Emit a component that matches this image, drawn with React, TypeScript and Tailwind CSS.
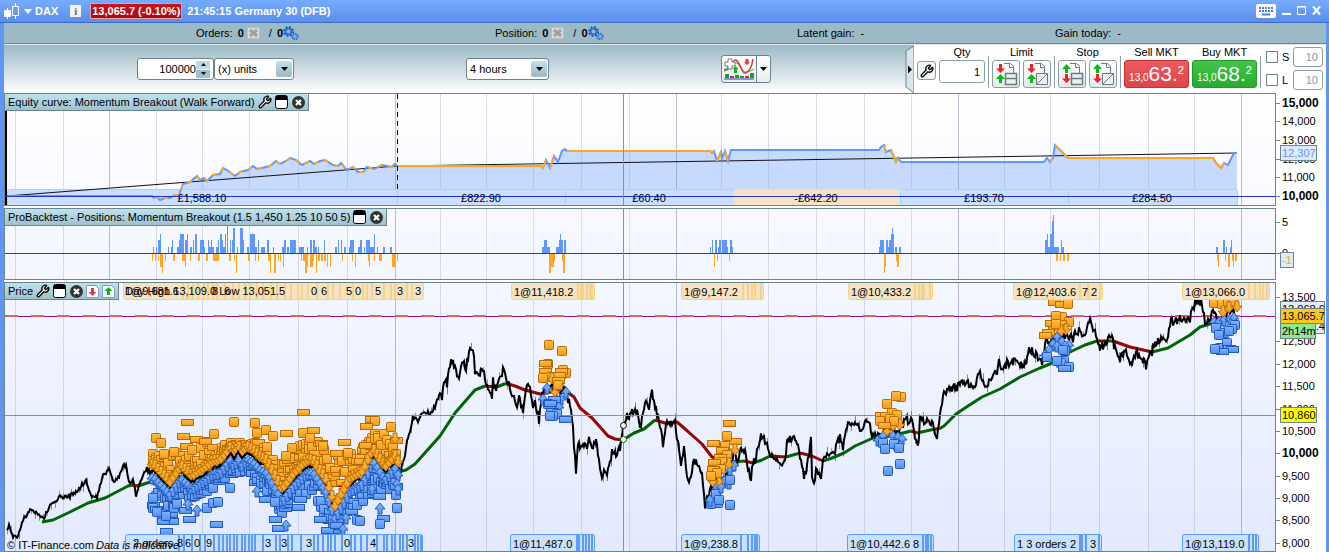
import { ReactNode } from "react";
import { Wrench } from "lucide-react";

type Point = [number, number];
type Bar = [x: number, width: number, level: number];
type Marker = [kind: "s" | "r" | "a", x: number, y: number];
type Tag = { x: number; width: number; text: string; slivers: number[]; extra?: [number, string][] };

// x of the chart's left edge; all series are stored in window coordinates
const LEFT = 5;

const gridLines = [15, 63, 156, 202, 249, 298, 347, 440, 486, 533, 581, 629, 721, 768, 816, 864, 911, 1004, 1050, 1099, 1148, 1194];
const yearLines = [109, 395, 676, 958, 1241];

const price: Point[] = [
  [7, 532], [9, 524], [13, 537], [17, 537], [23, 520], [30, 510], [37, 513], [44, 519], [47, 511], [53, 502], [60, 497], [70, 496],
  [78, 490], [86, 480], [91, 496], [97, 498], [103, 475], [109, 470], [113, 482], [119, 477], [123, 465], [126, 465], [129, 483],
  [133, 480], [136, 495], [140, 482], [147, 469], [150, 473], [153, 470], [170, 488], [181, 472], [192, 482], [207, 472], [213, 467],
  [220, 466], [227, 458], [231, 453], [234, 459], [238, 452], [242, 458], [247, 453], [253, 456], [260, 463], [267, 467], [282, 495],
  [295, 478], [306, 467], [313, 466], [327, 487], [335, 512], [350, 484], [363, 477], [373, 455], [385, 473], [395, 462], [400, 472],
  [404, 460], [407, 442], [410, 433], [413, 417], [418, 421], [423, 413], [430, 413], [435, 407], [440, 392], [442, 397], [444, 385],
  [447, 383], [451, 360], [455, 368], [459, 377], [463, 363], [466, 367], [468, 358], [471, 347], [474, 355], [475, 372], [479, 377],
  [483, 367], [485, 383], [492, 397], [493, 380], [496, 393], [500, 377], [503, 370], [508, 383], [513, 397], [517, 408], [519, 395],
  [523, 413], [527, 383], [530, 390], [533, 410], [535, 400], [539, 420], [542, 393], [550, 383], [557, 397], [565, 387], [570, 407],
  [573, 427], [574, 447], [576, 470], [578, 443], [583, 447], [587, 447], [589, 433], [592, 447], [596, 440], [598, 457], [602, 480],
  [604, 467], [607, 478], [610, 460], [613, 450], [617, 457], [620, 447], [622, 437], [623, 425], [627, 417], [633, 410], [637, 413],
  [641, 428], [643, 410], [646, 403], [649, 412], [651, 395], [652, 392], [656, 410], [659, 423], [663, 443], [667, 420], [670, 427],
  [674, 417], [677, 437], [681, 467], [684, 450], [687, 480], [690, 480], [693, 462], [698, 463], [702, 477], [705, 505], [709, 493],
  [717, 480], [723, 480], [730, 470], [734, 453], [737, 463], [740, 452], [745, 453], [748, 470], [751, 477], [753, 463], [757, 453],
  [761, 433], [765, 440], [768, 447], [771, 460], [773, 453], [778, 462], [785, 462], [787, 443], [792, 438], [798, 445], [802, 467],
  [804, 477], [807, 467], [811, 440], [812, 480], [813, 485], [817, 467], [821, 483], [823, 463], [828, 453], [835, 450], [840, 437],
  [843, 447], [846, 427], [852, 420], [857, 427], [862, 432], [865, 423], [869, 422], [872, 435], [880, 437], [887, 430], [900, 430],
  [906, 418], [912, 423], [916, 443], [918, 448], [920, 418], [927, 422], [933, 425], [937, 435], [939, 423], [941, 407], [943, 395],
  [946, 396], [949, 388], [957, 388], [960, 382], [967, 382], [972, 385], [976, 383], [979, 372], [983, 382], [987, 387], [990, 378],
  [997, 373], [999, 363], [1003, 373], [1007, 362], [1013, 363], [1017, 358], [1022, 368], [1027, 360], [1029, 348], [1034, 353],
  [1038, 358], [1042, 363], [1046, 343], [1057, 337], [1067, 337], [1073, 338], [1077, 330], [1082, 333], [1086, 331], [1090, 323],
  [1097, 335], [1099, 347], [1104, 347], [1110, 335], [1113, 342], [1117, 355], [1120, 358], [1124, 352], [1128, 355], [1132, 367],
  [1134, 353], [1140, 355], [1146, 367], [1148, 357], [1152, 353], [1155, 342], [1167, 338], [1171, 322], [1180, 319], [1190, 319],
  [1193, 307], [1197, 300], [1202, 303], [1205, 320], [1208, 322], [1213, 313], [1220, 320], [1227, 317], [1232, 308], [1236, 317],
];

const averages: { up: boolean; points: string }[] = [
  { up: true, points: "42,522 53,520 70,512 88,503 105,498 128,486 132,485" },
  { up: false, points: "132,485 138,486" },
  { up: true, points: "138,486 150,482 165,476 200,478 225,464 255,462" },
  { up: false, points: "255,462 268,465 282,471 298,474 325,485 355,486" },
  { up: true, points: "355,486 365,482 380,474 398,472 406,470 415,464 440,436 455,413 475,390 485,386" },
  { up: false, points: "485,386 497,387" },
  { up: true, points: "497,387 504,384 508,384" },
  { up: false, points: "508,384 515,386 525,390 540,394 556,391 570,394 574,397 580,408 592,418 600,427 608,436 615,439 623,440" },
  { up: true, points: "623,440 634,433 644,429 655,420" },
  { up: false, points: "655,420 665,423 677,422 684,428 693,436 702,444 712,457 733,462" },
  { up: true, points: "733,462 744,461" },
  { up: false, points: "744,461 753,463" },
  { up: true, points: "753,463 762,460 770,456" },
  { up: false, points: "770,456 786,457" },
  { up: true, points: "786,457 800,453" },
  { up: false, points: "800,453 812,456 823,461" },
  { up: true, points: "823,461 832,458 844,453 855,446 873,438 880,438 895,435 911,431" },
  { up: false, points: "911,431 917,433" },
  { up: true, points: "917,433 935,429" },
  { up: false, points: "935,429 939,429" },
  { up: true, points: "939,429 944,426 956,414 968,406 982,397 1000,389 1020,377 1040,368 1050,364 1070,352 1085,345 1097,341" },
  { up: false, points: "1097,341 1106,341" },
  { up: true, points: "1106,341 1113,341" },
  { up: false, points: "1113,341 1130,347 1152,352" },
  { up: true, points: "1152,352 1168,348 1190,335 1200,327 1213,323 1225,321 1237,320" },
];

const equity: Point[] = [
  [7, 196], [152, 196], [154, 198], [157, 197], [160, 200], [165, 198], [170, 198], [175, 195], [179, 195], [183, 184], [190, 182], [197, 176],
  [200, 180], [204, 178], [207, 181], [213, 175], [220, 174], [223, 168], [227, 170], [231, 173], [235, 176], [240, 172], [248, 170],
  [253, 166], [257, 169], [262, 168], [270, 166], [276, 161], [280, 164], [286, 161], [290, 158], [296, 160], [302, 165], [310, 161],
  [314, 164], [320, 161], [325, 160], [333, 165], [338, 166], [341, 163], [347, 170], [353, 167], [358, 172], [363, 172], [367, 167],
  [374, 169], [382, 165], [392, 167], [395, 164], [397, 166], [541, 166], [543, 168], [546, 160], [550, 168], [554, 156], [558, 162],
  [562, 151], [565, 149], [567, 151], [710, 151], [712, 153], [714, 151], [717, 161], [721, 152], [722, 158], [725, 151], [728, 161],
  [731, 150], [879, 150], [881, 147], [884, 145], [886, 152], [891, 150], [896, 162], [898, 158], [901, 162], [1044, 162], [1047, 158],
  [1050, 162], [1053, 158], [1055, 145], [1060, 150], [1068, 158], [1213, 158], [1216, 163], [1221, 168], [1224, 163], [1228, 165],
  [1234, 153], [1237, 153],
];

// index ranges of the equity series that are falling
const losses = [[49, 52], [53, 54], [58, 61], [62, 63], [65, 66], [70, 71], [72, 74], [78, 79], [80, 86]];

const periods = [
  { from: 7, to: 397, gain: "£1,588.10", at: 202 },
  { from: 397, to: 565, gain: "£822.90", at: 481 },
  { from: 565, to: 733, gain: "£60.40", at: 649 },
  { from: 733, to: 900, gain: "-£642.20", at: 816 },
  { from: 900, to: 1068, gain: "£193.70", at: 984 },
  { from: 1068, to: 1237, gain: "£284.50", at: 1152 },
];

const longBars: Bar[] = [
  [153, 1, 1], [156, 1, 1], [158, 2, 2], [160, 1, 3], [168, 1, 1], [171, 1, 1], [172, 1, 2], [177, 2, 1], [179, 1, 2], [180, 4, 3],
  [185, 2, 2], [187, 1, 3], [190, 2, 1], [193, 1, 2], [195, 2, 3], [200, 4, 2], [204, 1, 1], [208, 1, 2], [209, 2, 1], [211, 1, 2],
  [212, 2, 1], [216, 2, 1], [218, 1, 2], [220, 2, 3], [222, 1, 2], [223, 2, 1], [225, 1, 3], [227, 1, 5], [230, 1, 2], [232, 1, 2],
  [233, 2, 4], [237, 1, 1], [240, 3, 4], [243, 1, 2], [247, 2, 1], [250, 5, 3], [255, 2, 1], [258, 1, 2], [261, 4, 1], [267, 2, 2],
  [273, 1, 1], [282, 2, 1], [284, 2, 2], [287, 2, 1], [290, 6, 2], [299, 5, 1], [307, 1, 1], [310, 2, 2], [313, 2, 2], [315, 2, 1],
  [318, 1, 1], [324, 1, 2], [335, 2, 1], [338, 1, 2], [341, 1, 2], [344, 2, 1], [349, 1, 1], [350, 4, 2], [358, 2, 1], [360, 2, 2],
  [364, 1, 1], [366, 4, 2], [370, 4, 1], [374, 1, 3], [377, 1, 1], [383, 2, 1], [390, 2, 1],
  [542, 2, 1], [544, 3, 2], [547, 3, 1], [556, 3, 1], [559, 1, 2], [560, 1, 3], [561, 2, 2], [564, 2, 2],
  [710, 1, 1], [712, 1, 2], [715, 2, 2], [718, 1, 1], [719, 2, 2], [722, 5, 2], [727, 1, 1], [730, 2, 2], [732, 1, 1],
  [879, 1, 1], [880, 4, 2], [886, 2, 2], [888, 1, 1], [889, 2, 2], [891, 1, 3], [892, 1, 4], [893, 1, 3], [895, 2, 1], [899, 2, 1],
  [1045, 2, 2], [1047, 1, 3], [1048, 2, 1], [1050, 2, 3], [1052, 1, 5], [1053, 1, 6], [1054, 5, 1], [1061, 1, 2], [1062, 2, 1],
  [1216, 2, 1], [1223, 2, 2], [1226, 1, 1], [1230, 1, 1], [1231, 1, 2],
];

const shortBars: Bar[] = [
  [152, 1, 1], [155, 1, 1], [158, 1, 1], [160, 2, 2], [162, 1, 3], [165, 1, 1], [173, 2, 1], [182, 3, 1], [185, 1, 2], [190, 1, 1],
  [198, 2, 1], [206, 2, 1], [213, 6, 1], [229, 2, 1], [234, 1, 1], [236, 1, 3], [248, 2, 1], [255, 1, 1], [258, 1, 1], [268, 2, 1],
  [270, 1, 3], [274, 2, 3], [278, 1, 1], [280, 1, 1], [283, 1, 2], [301, 1, 1], [303, 2, 1], [305, 2, 3], [307, 1, 2], [310, 3, 2],
  [313, 1, 1], [316, 1, 3], [318, 2, 1], [321, 2, 1], [324, 2, 1], [327, 1, 2], [330, 1, 2], [342, 1, 1], [352, 1, 1], [355, 1, 2],
  [368, 1, 1], [369, 1, 2], [374, 1, 1], [379, 3, 1], [392, 4, 2], [397, 1, 1],
  [549, 2, 3], [551, 3, 2], [554, 1, 1], [562, 1, 1], [563, 2, 3],
  [714, 1, 2], [717, 1, 1], [729, 1, 1],
  [884, 1, 3], [885, 1, 2], [896, 1, 1], [897, 2, 2],
  [1056, 2, 1], [1060, 1, 1], [1063, 2, 1], [1067, 2, 1],
  [1217, 1, 1], [1218, 1, 2], [1225, 1, 1], [1228, 2, 2], [1232, 1, 1], [1233, 1, 2], [1235, 2, 1],
];

const sells: Marker[] = [
  ["r", 303, 412], ["r", 187, 422], ["s", 234, 422], ["s", 255, 423], ["s", 257, 433], ["s", 266, 430], ["s", 273, 436], ["r", 286, 433],
  ["s", 214, 434], ["r", 183, 436], ["s", 156, 438], ["s", 161, 443], ["s", 303, 433], ["r", 313, 430], ["s", 310, 438], ["r", 344, 442],
  ["r", 371, 419], ["s", 375, 421], ["r", 366, 426], ["s", 391, 427], ["a", 395, 438], ["s", 292, 448], ["s", 286, 456], ["r", 336, 453],
  ["s", 348, 453], ["s", 174, 452], ["s", 164, 454], ["r", 196, 439], ["r", 205, 441], ["r", 365, 445], ["s", 323, 446],
  ["s", 549, 345], ["s", 562, 351], ["s", 548, 364], ["r", 545, 363], ["s", 563, 370], ["r", 545, 371], ["s", 566, 373], ["r", 561, 371],
  ["s", 551, 377], ["s", 543, 378], ["r", 559, 375], ["a", 552, 378], ["a", 555, 391], ["r", 558, 380], ["s", 558, 385],
  ["r", 729, 423], ["r", 735, 441], ["s", 727, 436], ["r", 713, 443], ["s", 725, 446], ["a", 735, 449], ["r", 722, 450], ["s", 727, 455],
  ["r", 720, 457], ["s", 722, 462], ["a", 729, 463], ["r", 714, 462], ["s", 721, 469], ["r", 713, 469], ["a", 719, 480], ["a", 713, 481],
  ["s", 717, 473], ["s", 711, 476],
  ["s", 901, 397], ["s", 896, 396], ["s", 887, 404], ["s", 892, 413], ["s", 897, 415], ["r", 881, 415], ["s", 885, 417], ["s", 890, 419],
  ["a", 887, 430], ["a", 893, 425], ["a", 900, 424], ["s", 894, 421], ["s", 880, 421], ["r", 884, 425],
  ["r", 1054, 302], ["r", 1061, 304], ["s", 1068, 304], ["s", 1062, 317], ["s", 1056, 316], ["s", 1069, 322], ["r", 1060, 323],
  ["a", 1066, 329], ["a", 1061, 330], ["s", 1053, 326], ["r", 1051, 323], ["r", 1048, 332], ["r", 1045, 335], ["s", 1056, 324],
  ["s", 1214, 303], ["s", 1222, 304], ["s", 1228, 302], ["a", 1223, 311], ["s", 1233, 303], ["a", 1237, 306], ["a", 1229, 307],
];

const buys: Marker[] = [
  ["s", 153, 498], ["s", 157, 512], ["r", 172, 521], ["r", 163, 521], ["r", 166, 531], ["s", 166, 516], ["r", 185, 510], ["r", 189, 519],
  ["a", 197, 511], ["a", 188, 505], ["s", 207, 508], ["s", 213, 503], ["s", 218, 502], ["r", 216, 524], ["s", 230, 488], ["a", 257, 492],
  ["r", 265, 499], ["s", 275, 502], ["r", 275, 519], ["r", 278, 528], ["a", 286, 526], ["r", 298, 507], ["r", 300, 499], ["r", 320, 519],
  ["r", 327, 530], ["r", 336, 525], ["a", 346, 519], ["s", 357, 520], ["s", 360, 521], ["a", 343, 530], ["a", 372, 490], ["r", 379, 496],
  ["r", 383, 518], ["s", 380, 524], ["a", 380, 509], ["s", 397, 508], ["s", 396, 495], ["a", 397, 485], ["a", 398, 490], ["r", 334, 537],
  ["a", 547, 389], ["a", 566, 393], ["a", 543, 400], ["a", 561, 400], ["a", 559, 408], ["r", 554, 399], ["s", 548, 404], ["r", 550, 403],
  ["r", 552, 411], ["s", 557, 414], ["r", 565, 419], ["s", 553, 416], ["s", 550, 416],
  ["a", 730, 471], ["a", 734, 466], ["a", 724, 482], ["a", 729, 484], ["s", 730, 480], ["a", 717, 489], ["s", 716, 494], ["a", 721, 488],
  ["s", 718, 503], ["s", 711, 504], ["a", 710, 501], ["s", 730, 505], ["s", 719, 500],
  ["a", 878, 441], ["a", 883, 437], ["a", 893, 437], ["a", 898, 438], ["a", 902, 440], ["s", 883, 443], ["s", 898, 446], ["s", 894, 444],
  ["s", 885, 449], ["s", 900, 464], ["s", 888, 471], ["s", 899, 448],
  ["a", 1057, 338], ["a", 1053, 345], ["a", 1062, 343], ["a", 1069, 346], ["a", 1049, 351], ["a", 1045, 356], ["a", 1057, 347],
  ["a", 1065, 347], ["s", 1047, 357], ["s", 1065, 351], ["s", 1063, 350], ["s", 1064, 361], ["s", 1061, 363], ["s", 1057, 361],
  ["s", 1069, 367], ["r", 1064, 368],
  ["a", 1214, 323], ["a", 1219, 323], ["a", 1224, 321], ["a", 1230, 320], ["a", 1234, 319], ["s", 1216, 328], ["s", 1235, 325],
  ["s", 1232, 329], ["s", 1224, 333], ["s", 1219, 335], ["s", 1229, 331], ["s", 1220, 348], ["s", 1227, 343], ["r", 1229, 348],
  ["r", 1232, 349], ["r", 1222, 351], ["s", 1215, 349],
];

const sellTags: Tag[] = [
  { x: 511, width: 65, text: "1@11,418.2", slivers: [577, 580, 582, 586, 589, 591] },
  { x: 681, width: 60, text: "1@9,147.2", slivers: [742, 747, 751, 754, 760] },
  { x: 848, width: 65, text: "1@10,433.2", slivers: [914, 918, 921, 923, 929] },
  { x: 1013, width: 65, text: "1@12,403.6", slivers: [1079, 1087, 1099], extra: [[1082, "7"], [1091, "2"]] },
  { x: 1182, width: 65, text: "1@13,066.0", slivers: [1248, 1254, 1259, 1262, 1266] },
];

const buyTags: Tag[] = [
  { x: 510, width: 65, text: "1@11,487.0", slivers: [576, 578, 582, 585, 588, 591] },
  { x: 681, width: 58, text: "1@9,238.8", slivers: [740, 747, 751, 754, 756] },
  { x: 847, width: 65, text: "1@10,442.6", slivers: [922, 925, 927, 930], extra: [[913, "8"]] },
  { x: 1014, width: 55, text: "1 3 orders", slivers: [1079, 1081, 1085, 1098], extra: [[1070, "2"], [1090, "3"]] },
  { x: 1182, width: 65, text: "1@13,119.0", slivers: [1248, 1252, 1255] },
];

function randomizer(seed: number) {
  let state = seed;
  return () => {
    state = (state * 16807) % 2147483647;
    return state / 2147483647;
  };
}

function valueAt(points: Point[], x: number) {
  const i = points.findIndex((p) => p[0] >= x);
  if (i === -1) return points[points.length - 1][1];
  if (i === 0) return points[0][1];
  const [x0, y0] = points[i - 1];
  const [x1, y1] = points[i];
  return y0 + ((y1 - y0) * (x - x0)) / (x1 - x0);
}

const random = randomizer(4711);
const pricePath: Point[] = [];
for (let x = 7; x <= 1236; x += 1) {
  const noise = x < 440 ? 4 : 9;
  const flat = x > 225 && x < 255;
  pricePath.push([x, valueAt(price, x) + (flat ? 0 : (random() - 0.5) * noise)]);
}
const wicks = pricePath
  .filter((_, i) => i % 4 === 0)
  .map(([x, y]) => ({ x, y, top: random() > 0.5, size: 3 + random() * 4, up: random() > 0.5 }));

// the first walk-forward window is so dense that its markers fill a band around the price
const sellTop: Point[] = [[150, 450], [170, 458], [182, 446], [200, 443], [215, 440], [230, 441], [255, 441], [270, 446], [282, 464], [300, 444], [318, 436], [330, 460], [340, 454], [355, 451], [368, 436], [380, 428], [400, 442]];
const buyBottom: Point[] = [[150, 509], [165, 526], [180, 500], [205, 494], [230, 475], [250, 475], [265, 497], [280, 516], [300, 496], [315, 495], [325, 520], [335, 535], [350, 512], [365, 500], [385, 488], [400, 490]];
const denseSells: Marker[] = [];
const denseBuys: Marker[] = [];
for (let x = 153; x <= 398; x += 3) {
  const mid = valueAt(price, x);
  const kinds = ["s", "r", "s"] as const;
  for (let n = 0; n < 2; n++) {
    const top = valueAt(sellTop, x);
    const bottom = valueAt(buyBottom, x);
    denseSells.push([kinds[Math.floor(random() * 3)], x, top + (mid - 7 - top) * random()]);
    denseBuys.push([kinds[Math.floor(random() * 3)], x, mid + 9 + (bottom - mid - 9) * random()]);
  }
}
for (let x = 152; x <= 399; x += 3) {
  const mid = valueAt(price, x);
  denseSells.push(["a", x, mid - 7]);
  denseBuys.push(["a", x, mid + 8]);
}

function linePoints(points: Point[]) {
  return points.map(([x, y]) => `${x},${y.toFixed(1)}`).join(" ");
}

function Plot({ top, height, className, overlay, children }: { top: number; height: string; className: string; overlay?: ReactNode; children: ReactNode }) {
  return (
    <svg className={`block w-full ${height} ${className}`} fontFamily="Liberation Sans, Arial, sans-serif" fontSize="11">
      <g transform={`translate(${-LEFT} ${-top})`}>
        <g shapeRendering="crispEdges">
          {gridLines.map((x) => (
            <rect key={x} x={x} y={top} width="1" height="300" fill="#5a6488" fillOpacity="0.2" />
          ))}
          {yearLines.map((x) => (
            <rect key={x} x={x} y={top} width="1" height="300" fill="#5a6090" fillOpacity="0.4" />
          ))}
        </g>
        {children}
        <rect x="623" y={top} width="1" height="300" fill="#c966dc" />
        {overlay}
      </g>
    </svg>
  );
}

function Axis({ top, height, children }: { top: number; height: string; children: ReactNode }) {
  return (
    <svg className={`block w-[50px] shrink-0 bg-white ${height}`} fontFamily="Liberation Sans, Arial, sans-serif" fontSize="11">
      <g transform={`translate(-1276 ${-top})`}>{children}</g>
    </svg>
  );
}

function Tick({ y, label, bold }: { y: number; label: string; bold?: boolean }) {
  return (
    <g>
      <rect x="1276" y={y} width="4" height="1" fill="#6b858d" />
      <text x="1282" y={y + 4} fontSize={bold ? 12 : 11} fontWeight={bold ? 700 : 400}>
        {label}
      </text>
    </g>
  );
}

function ValueBox({ x = 1280, y, width, label, fill, color = "#000" }: { x?: number; y: number; width: number; label: string; fill: string; color?: string }) {
  return (
    <g>
      <rect x={x + 0.5} y={y + 0.5} width={width} height="15" fill={fill} stroke="#6b858d" />
      <text x={x + 2} y={y + 12} fill={color}>
        {label}
      </text>
    </g>
  );
}

function OrderMarker({ marker: [kind, x, y], up }: { marker: Marker; up: boolean }) {
  const style = up ? { fill: "url(#buy)", stroke: "#2359b8" } : { fill: "url(#sell)", stroke: "#b86a05" };
  if (kind === "s") return <rect x={Math.round(x) - 4.5} y={Math.round(y) - 4.5} width="9" height="9" rx="1" {...style} />;
  if (kind === "r") return <rect x={Math.round(x) - 5.5} y={Math.round(y) - 2.5} width="12" height="6" {...style} />;
  const tip = up ? -1 : 1;
  return <path d={`M${x} ${y + 6 * tip}l5 ${-6 * tip}h-3v${-5 * tip}h-4v${5 * tip}h-3z`} {...style} />;
}

function OrderTag({ tag, buy }: { tag: Tag; buy?: boolean }) {
  const y = buy ? 534.5 : 282.5;
  const last = tag.slivers[tag.slivers.length - 1] + 3;
  const fill = buy ? "#c9e0ff" : "#f4e3c3";
  const stroke = buy ? "#5f9bff" : "#f6d288";
  return (
    <g>
      <rect x={tag.x + 0.5} y={y} width={last - tag.x} height="17" rx="2" fill={fill} stroke={stroke} />
      {tag.slivers.map((x) => (
        <rect key={x} x={x} y={y} width="2" height="17" fill={stroke} />
      ))}
      <text x={tag.x + 3} y={y + 13}>
        {tag.text}
      </text>
      {tag.extra?.map(([x, text]) => (
        <text key={x} x={x} y={y + 13}>
          {text}
        </text>
      ))}
    </g>
  );
}

function WindowIcon() {
  return (
    <svg width="14" height="14" viewBox="0 0 14 14">
      <rect x="0.5" y="0.5" width="12" height="13" rx="2" fill="#fff" stroke="#000" />
      <path d="M1 1h11v4H1z" fill="#000" />
    </svg>
  );
}

function CloseIcon() {
  return (
    <svg width="13" height="13" viewBox="0 0 13 13">
      <circle cx="6.5" cy="6.5" r="6.5" fill="#333" />
      <path d="M4 4l5 5M9 4l-5 5" stroke="#fff" strokeWidth="2.2" />
    </svg>
  );
}

function SheetIcon({ up }: { up: boolean }) {
  return (
    <svg width="13" height="13" viewBox="0 0 13 13">
      <path d="M.5.5h9l3 3v9H.5z" fill="#fff" stroke="#7c9fc4" />
      <path d={up ? "M6.5 2l4 4H8v4H5V6H2.500z" : "M6.500 11l4-4H8V3H5v4H2.500z"} fill={up ? "#0bb818" : "#e8343c"} />
    </svg>
  );
}

function WrenchIcon({ size = 14 }: { size?: number }) {
  return <Wrench size={size} strokeWidth={2.5} fill="#fff" color="#111" />;
}

function PanelTab({ title, wrench, children }: { title: string; wrench?: boolean; children?: ReactNode }) {
  return (
    <div className="absolute top-0 left-0 flex h-[17px] items-center gap-[3px] border-r border-b border-[#6b858d] bg-linear-to-b from-[#bfe3ee] to-[#9fc0cc] pr-[3px] pl-[3px]">
      <h2 className="text-[11px] whitespace-nowrap">{title}</h2>
      {wrench && (
        <button type="button" aria-label={`${title} settings`}>
          <WrenchIcon />
        </button>
      )}
      <button type="button" aria-label={`Detach ${title}`}>
        <WindowIcon />
      </button>
      <button type="button" aria-label={`Close ${title}`}>
        <CloseIcon />
      </button>
      {children}
    </div>
  );
}

function GearsIcon() {
  return (
    <svg width="16" height="15" viewBox="0 0 16 15" fill="none">
      <circle cx="5.500" cy="5.500" r="4.500" stroke="#1b56b8" strokeWidth="2" strokeDasharray="1.8 1.730" />
      <circle cx="5.500" cy="5.500" r="3" stroke="#2a6cd4" strokeWidth="2" />
      <circle cx="12" cy="10.500" r="3" stroke="#1b56b8" strokeWidth="1.500" strokeDasharray="1.200 1.160" />
      <circle cx="12" cy="10.500" r="1.900" stroke="#3f8cf0" strokeWidth="1.400" />
    </svg>
  );
}

function Counter({ label }: { label: string }) {
  return (
    <p className="flex items-center whitespace-nowrap">
      {label}
      <b className="ml-[5px]">0</b>
      <svg className="ml-[3px]" width="13" height="12" viewBox="0 0 13 12">
        <path d="M.5.5h12v11H.5z" fill="#d6dad8" stroke="#b9bdb9" />
        <path d="M3 3l7 6M10 3L3 9" stroke="#a0a0a0" strokeWidth="3" />
      </svg>
      <span className="ml-[9px]">/</span>
      <b className="ml-[5px]">0</b>
      <GearsIcon />
    </p>
  );
}

function Dropdown({ label, options, className }: { label: string; options: string[]; className: string }) {
  return (
    <div className={`relative h-[22px] ${className}`}>
      <select aria-label={label} className="h-full w-full appearance-none rounded-[3px] border border-[#6b858d] bg-white pl-[3px] text-[11px]">
        {options.map((option) => (
          <option key={option}>{option}</option>
        ))}
      </select>
      <span className="pointer-events-none absolute top-[3px] right-[2px] flex h-4 w-4 items-center justify-center rounded-[2px] bg-linear-to-b from-[#c0e0ea] to-[#9bbac6]">
        <Caret />
      </span>
    </div>
  );
}

function Caret() {
  return (
    <svg width="7" height="4" viewBox="0 0 7 4">
      <path d="M0 0h7L3.500 4z" />
    </svg>
  );
}

function OrderButton({ label, topUp, cut }: { label: string; topUp: boolean; cut: boolean }) {
  return (
    <button type="button" aria-label={label} className="flex h-7 w-7 items-center justify-center rounded-[3px] border border-[#8a9da3] bg-linear-to-b from-white to-[#e6e9ea]">
      <svg width="26" height="26" viewBox="0 0 26 26" fill="none">
        <path d="M11 2.500h6.500l3 3V12M16.500 2.500v4h4" stroke="#6b7b83" />
        {cut ? (
          <path d="M12.500 12.500h11v11h-11zM12.500 23.500l11-11" fill="#eceff0" stroke="#6b7b83" />
        ) : (
          <path d="M12.500 12.500h11v11h-11zM12.500 17.500h11" fill="#eceff0" stroke="#6b7b83" strokeWidth="1.500" />
        )}
        <path d={topUp ? "M7.500 3l4.500 5H9v4H6V8H3z" : "M7.500 12L3 7.500h3V3h3v4.500h3z"} fill={topUp ? "#0bb818" : "#f0202a"} />
        <path d={topUp ? "M7.500 22L3 17.500h3V13h3v4.500h3z" : "M7.500 13l4.500 5H9v4H6v-4H3z"} fill={topUp ? "#f0202a" : "#0bb818"} />
      </svg>
    </button>
  );
}

function OrderGroup({ label, topUp }: { label: string; topUp: boolean }) {
  return (
    <div className="flex flex-col items-center gap-[1px]">
      <p className="h-[14px] leading-[14px]">{label}</p>
      <div className="flex gap-[3px]">
        <OrderButton label={`${label} order`} topUp={topUp} cut={false} />
        <OrderButton label={`Trailing ${label} order`} topUp={topUp} cut />
      </div>
    </div>
  );
}

function MarketButton({ label, big, color }: { label: string; big: string; color: string }) {
  return (
    <div className="flex flex-col items-center gap-[1px]">
      <p className="h-[14px] leading-[14px]">{label}</p>
      <button type="button" aria-label={`${label} 13,0${big}.2`} className={`flex h-7 w-[65px] justify-center rounded-[3px] border text-white ${color}`}>
        <span className="mt-[11px] text-[10px] leading-3">13,0</span>
        <span className="mt-[3px] text-[21px] leading-5">{big}.</span>
        <span className="mt-[3px] text-[11px] leading-3">2</span>
      </button>
    </div>
  );
}

function Divider() {
  return <span className="h-8 w-px bg-[#8aa1a9]" />;
}

function ProtectRow({ letter, label }: { letter: string; label: string }) {
  return (
    <div className="flex h-5 items-center">
      <label className="flex items-center gap-[4px]">
        <input type="checkbox" aria-label={label} className="h-3 w-3 appearance-none border border-[#6b858d] bg-white" />
        <span className="w-[11px]">{letter}</span>
      </label>
      <input aria-label={`${label} distance`} defaultValue="10" className="h-5 w-[30px] rounded-[3px] border border-[#8a9da3] bg-white pr-[4px] text-right text-[#8c979c]" />
    </div>
  );
}

function TradePanel() {
  return (
    <div className="ml-auto flex h-full shrink-0 items-stretch">
      <svg width="9" height="49" viewBox="0 0 9 49">
        <path d="M9 1L1 6v36l8 6z" fill="#d9e5ea" stroke="#6b858d" />
        <path d="M3 20.500l4 4-4 4z" />
      </svg>
      <div className="flex items-end gap-[3px] bg-white pr-[3px] pb-[5px] pl-[3px]">
        <button type="button" aria-label="Order settings" className="mb-[8px] flex h-[19px] w-[19px] items-center justify-center rounded-[3px] border border-[#8a9da3] bg-[#f3f4f4]">
          <WrenchIcon />
        </button>
        <label className="mb-[5px] flex flex-col items-center gap-[1px]">
          <span className="h-[14px] leading-[14px]">Qty</span>
          <input defaultValue="1" className="h-[23px] w-[46px] rounded-[3px] border border-[#8a9da3] bg-white pr-[4px] text-right" />
        </label>
        <Divider />
        <OrderGroup label="Limit" topUp={false} />
        <Divider />
        <OrderGroup label="Stop" topUp />
        <Divider />
        <MarketButton label="Sell MKT" big="63" color="border-[#c93038] bg-linear-to-b from-[#ee5a60] to-[#dc464c]" />
        <MarketButton label="Buy MKT" big="68" color="border-[#1f9c28] bg-linear-to-b from-[#42c648] to-[#27ab2f]" />
        <Divider />
        <div className="-mb-[2px] flex flex-col gap-[3px] pl-[2px]">
          <ProtectRow letter="S" label="Stop" />
          <ProtectRow letter="L" label="Limit" />
        </div>
      </div>
    </div>
  );
}

function TitleBar() {
  return (
    <header className="flex h-[23px] items-center border-b border-[#3a6cc4] bg-linear-to-b from-[#76acff] to-[#5a8eea] pr-[7px] pl-[4px] text-[11px] font-bold text-white">
      <svg width="16" height="18" viewBox="0 0 16 18" stroke="#fff">
        <path d="M.5 8.500h6v6h-6z" fill="#fff" />
        <path d="M3.500 6v11M11.500 1v4M11.500 13v4M8.500 4.500h6v9h-6z" fill="none" />
      </svg>
      <svg className="ml-[4px]" width="8" height="5" viewBox="0 0 8 5">
        <path d="M0 0h8L4 5z" fill="#fff" />
      </svg>
      <h1 className="ml-[3px]">DAX</h1>
      <button type="button" aria-label="Instrument information" className="ml-[12px] flex h-3 w-[11px] items-center justify-center bg-[#f2f2ee] font-['Liberation_Serif',serif] text-[#6c6c6c]">
        i
      </button>
      <p className="ml-[9px] flex h-4 items-center border border-[#e8a0a0] bg-linear-to-b from-[#c8141c] to-[#a40c12] px-px whitespace-nowrap">13,065.7 (-0.10%)</p>
      <p className="ml-[5px] whitespace-nowrap">21:45:15 Germany 30 (DFB)</p>
      <div className="ml-auto flex items-center">
        <button type="button" aria-label="Keyboard" className="rounded-[2px] bg-white">
          <svg width="20" height="14" viewBox="0 0 20 14">
            <path d="M3 4h14M3 7h14" stroke="#4a7fdc" strokeWidth="2" strokeDasharray="2 1" />
            <path d="M6 10.500h8" stroke="#4a7fdc" strokeWidth="2" />
          </svg>
        </button>
        <svg className="ml-[6px]" width="40" height="12" viewBox="0 0 40 12" fill="none" stroke="#fff">
          <path d="M0 9h9" strokeWidth="2" />
          <path d="M15.500 1.500h8v8h-8zM15 2h9" />
          <path d="M31 1.500l7 8M38 1.500l-7 8" strokeWidth="2" />
        </svg>
      </div>
    </header>
  );
}

function Toolbar() {
  return (
    <div className="flex h-[49px] items-center border-t border-[#dfe9ed] bg-linear-to-b from-[#9bbac6] to-white text-[11px]">
      <div className="ml-[133px] flex h-[22px] w-[77px] shrink-0 items-center rounded-[3px] border border-[#6b858d] bg-white pr-[2px]">
        <input aria-label="Number of units" defaultValue="100000" className="w-[58px] text-right" />
        <span className="flex flex-col gap-px">
          <button type="button" aria-label="More units" className="flex h-2 w-[14px] items-center justify-center bg-[#bcdbe5]">
            <svg width="5" height="3" viewBox="0 0 5 3">
              <path d="M0 3h5L2.500 0z" />
            </svg>
          </button>
          <button type="button" aria-label="Fewer units" className="flex h-2 w-[14px] items-center justify-center bg-[#9fc0cc]">
            <svg width="5" height="3" viewBox="0 0 5 3">
              <path d="M0 0h5L2.500 3z" />
            </svg>
          </button>
        </span>
      </div>
      <Dropdown label="Unit" options={["(x) units"]} className="w-[80px] shrink-0" />
      <Dropdown label="Timeframe" options={["4 hours"]} className="ml-[172px] w-[83px] shrink-0" />
      <div className="ml-[172px] flex h-7 w-[50px] shrink-0 overflow-hidden rounded-[3px] border border-[#6b858d] bg-linear-to-b from-white to-[#e9ecee]">
        <button type="button" aria-label="Add indicator" className="flex w-[35px] items-center justify-center border-r border-[#6b858d]">
          <svg width="31" height="22" viewBox="0 0 31 22" fill="none">
            <path d="M0 14C5 6 9 4 13 5c4 3 6 11 11 9l6-3" stroke="#35b545" />
            <path d="M0 11C5 16 8 1 12 2c4 2 6 14 9 13 4-1 7-7 8-14" stroke="#cc3a40" strokeWidth="1.500" />
            <path d="M4 1h4v3h3v4H8v3H4V8H1V4h3z" fill="#fff" stroke="#687b84" />
            <path d="M11.500 8l3 3H13v4h-3v-4H8.500z" fill="#0bb818" />
            <path d="M23 7l3-3h-1.500V1h-3v3H20z" fill="#e8343c" />
            <path d="M1 16h4v4H1zM11 17h4v3h-4zM16 18h4v2h-4zM26 15h4v5h-4z" fill="#0aa818" />
            <path d="M6 18h4v2H6zM21 18h4v2h-4z" fill="#cc2a30" />
            <path d="M0 21h30" stroke="#2d39c8" />
          </svg>
        </button>
        <button type="button" aria-label="Indicator menu" className="flex flex-1 items-center justify-center">
          <Caret />
        </button>
      </div>
      <TradePanel />
    </div>
  );
}

function EquityPanel() {
  return (
    <section className="flex">
      <div className="relative min-w-0 flex-1 border border-[#6b858d]">
        <Plot top={94} height="h-[111px]" className="bg-linear-to-b from-white to-[#f8f9ff]">
          <polygon points={`7,205 ${linePoints(equity)} 1237,205`} fill="#5f97ff" fillOpacity="0.33" />
          {periods.map((p) => (
            <rect
              key={p.from}
              x={p.from + 0.5}
              y="189.5"
              width={p.to - p.from}
              height="18"
              rx="2"
              fill={p.gain.startsWith("-") ? "#f4e3c6" : "#c8dfff"}
              stroke={p.gain.startsWith("-") ? "#f6d9a0" : "#a8d0ff"}
            />
          ))}
          <path d="M7 196L397 166L1237 153" fill="none" stroke="#111" />
          <polyline points={linePoints(equity)} fill="none" stroke="#5f97ff" strokeWidth="2" />
          <polyline points={linePoints(equity.slice(2, 50))} fill="none" stroke="#ffa526" strokeWidth="2" strokeDasharray="5 6" />
          {losses.map(([from, to]) => (
            <polyline key={from} points={linePoints(equity.slice(from, to + 1))} fill="none" stroke="#ffa526" strokeWidth="2" />
          ))}
          <rect x="5" y="108" width="2" height="98" />
          <path d="M397.5 94V190" stroke="#000" strokeDasharray="5 4" />
          <rect x="4" y="196" width="3000" height="1" fill="#2a2fd8" />
          {periods.map((p) => (
            <text key={p.from} x={p.at} y="202" textAnchor="middle">
              {p.gain}
            </text>
          ))}
        </Plot>
        <PanelTab title="Equity curve: Momentum Breakout (Walk Forward)" wrench />
      </div>
      <Axis top={93} height="h-[113px]">
        <Tick y={103} label="15,000" bold />
        <Tick y={121} label="14,000" />
        <Tick y={140} label="13,000" />
        <Tick y={159} label="12,000" />
        <Tick y={177} label="11,000" />
        <Tick y={196} label="10,000" bold />
        <ValueBox y={145} width={36} label="12,307" fill="#dfe9f7" color="#5f97ff" />
      </Axis>
    </section>
  );
}

function PositionsPanel() {
  return (
    <section className="flex">
      <div className="relative min-w-0 flex-1 border border-[#6b858d]">
        <Plot top={209} height="h-[70px]" className="bg-linear-to-b from-[#f8f9ff] to-[#f3f6ff]">
          <g shapeRendering="crispEdges">
            {longBars.map(([x, width, level]) => (
              <rect key={x} x={x} y={253 - Math.round(level * 6.3)} width={width} height={Math.round(level * 6.3)} fill="#5f97ff" />
            ))}
            {shortBars.map(([x, width, level]) => (
              <rect key={x} x={x} y="254" width={width} height={level * 6 + 1} fill="#ffa526" />
            ))}
            <rect x="4" y="253" width="3000" height="1" fill="#2a2fd8" />
          </g>
        </Plot>
        <PanelTab title="ProBacktest - Positions: Momentum Breakout (1.5 1,450 1.25 10 50 5)" />
      </div>
      <Axis top={208} height="h-[72px]">
        <Tick y={222} label="5" />
        <Tick y={253} label="0" />
        <ValueBox y={252} width={13} label="-1" fill="#dfe9f7" color="#ffa526" />
      </Axis>
    </section>
  );
}

function PricePanel() {
  const crosshairDots = (
    <>
      <circle cx="623.500" cy="425.500" r="3" fill="#fff" stroke="#000" />
      <circle cx="623.500" cy="439.500" r="3" fill="#fff" stroke="#036403" />
    </>
  );

  return (
    <section className="flex">
      <div className="relative min-w-0 flex-1 border border-[#6b858d]">
        <Plot top={283} height="h-[268px]" className="bg-linear-to-b from-[#f4f7ff] to-[#e3eafe]" overlay={crosshairDots}>
          <defs>
            <linearGradient id="buy" x1="0" y1="0" x2="0" y2="1">
              <stop offset="0" stopColor="#7db4ff" />
              <stop offset="1" stopColor="#5590f2" />
            </linearGradient>
            <linearGradient id="sell" x1="0" y1="0" x2="0" y2="1">
              <stop offset="0" stopColor="#ffbe40" />
              <stop offset="1" stopColor="#f49a18" />
            </linearGradient>
          </defs>
          <rect x="4" y="316" width="3000" height="1" fill="#93109c" />
          <path d="M5 316H3000" stroke="#e0625f" strokeWidth="2" strokeDasharray="13 13" />
          {wicks.map((w) => (
            <path key={w.x} d={`M${w.x + 0.5} ${w.y}v${w.top ? -w.size : w.size}`} stroke={w.up ? "#4ccc50" : "#e05a5a"} />
          ))}
          {averages.map((a) => (
            <polyline key={a.points} points={a.points} fill="none" stroke={a.up ? "#036403" : "#960404"} strokeWidth="3" strokeLinejoin="round" />
          ))}
          <polyline points={linePoints(pricePath)} fill="none" stroke="#000" strokeWidth="2" />
          <rect x="4" y="415" width="3000" height="1" fill="#c966dc" />
          {[...denseBuys, ...buys].map((m, i) => (
            <OrderMarker key={i} marker={m} up />
          ))}
          {[...denseSells, ...sells].map((m, i) => (
            <OrderMarker key={i} marker={m} up={false} />
          ))}
          <polyline points={linePoints(price.filter(([x]) => x > 225 && x < 255))} fill="none" stroke="#000" strokeWidth="2" />

          <rect x="123.5" y="282.5" width="300" height="17" rx="2" fill="#f4e3c3" stroke="#f6d288" />
          {[182, 187, 192, 197, 203, 207, 212, 216, 224, 232, 238, 244, 249, 256, 262, 270, 276, 284, 290, 297, 301, 307, 316, 327, 332, 339, 352, 362, 366, 371, 383, 390, 394, 406, 411].map((x) => (
            <rect key={x} x={x} y="283" width="2" height="17" fill="#f6d288" />
          ))}
          <text x="125" y="295">1@9,681.6</text>
          <text x="125" y="295">Day High 13,109.0 Low 13,051.5</text>
          <text x="212" y="295">8</text>
          <text x="224" y="295">6</text>
          {[[311, "0"], [321, "6"], [346, "5"], [355, "0"], [375, "5"], [397, "3"], [415, "3"]].map(([x, digit]) => (
            <text key={x} x={x} y="295">
              {digit}
            </text>
          ))}
          {sellTags.map((tag) => (
            <OrderTag key={tag.x} tag={tag} />
          ))}

          <rect x="125.5" y="534.500" width="297" height="20" rx="2" fill="#c9e0ff" stroke="#5f9bff" />
          {[178, 183, 191, 199, 204, 213, 218, 222, 226, 229, 233, 236, 241, 244, 248, 251, 254, 262, 275, 279, 287, 291, 300, 313, 317, 322, 327, 330, 334, 341, 350, 354, 360, 366, 376, 383, 386, 391, 394, 399, 402, 406, 414, 417, 420].map((x) => (
            <rect key={x} x={x} y="535" width="2" height="17" fill="#5f9bff" />
          ))}
          <text x="133" y="547">2 orders</text>
          {[[177, "8"], [185, "6"], [194, "0"], [206, "9"], [265, "3"], [281, "3"], [306, "3"], [344, "0"], [370, "4"], [408, "3"]].map(([x, digit]) => (
            <text key={x} x={x} y="547">
              {digit}
            </text>
          ))}
          {buyTags.map((tag) => (
            <OrderTag key={tag.x} tag={tag} buy />
          ))}
          <text x="7" y="549">© IT-Finance.com</text>
          <text x="96" y="549" fontStyle="italic">
            Data is indicative
          </text>
        </Plot>
        <PanelTab title="Price" wrench>
          <button type="button" aria-label="Sell orders">
            <SheetIcon up={false} />
          </button>
          <button type="button" aria-label="Buy orders">
            <SheetIcon up />
          </button>
        </PanelTab>
      </div>
      <Axis top={282} height="h-[270px]">
        <Tick y={297} label="13,500" />
        <Tick y={341} label="12,500" />
        <Tick y={364} label="12,000" />
        <Tick y={386} label="11,500" />
        <Tick y={409} label="11,000" />
        <Tick y={431} label="10,500" />
        <Tick y={453} label="10,000" bold />
        <Tick y={476} label="9,500" />
        <Tick y={498} label="9,000" />
        <Tick y={520} label="8,500" />
        <Tick y={543} label="8,000" />
        <ValueBox y={301} width={44} label="13,068.6" fill="#e3ebf6" />
        <ValueBox y={318} width={44} label="12,971.4" fill="#e3ebf6" />
        <ValueBox y={323} width={35} label="2h14m" fill="#90e890" />
        <ValueBox y={308} width={44} label="13,065.7" fill="#ffc81e" />
        <ValueBox y={407} width={36} label="10,860" fill="#ffff00" />
      </Axis>
    </section>
  );
}

export default function App() {
  return (
    <main className="border-r-[3px] border-l-4 border-[#5f96f5] bg-white font-['Liberation_Sans',Arial,sans-serif] text-[11px] text-black">
      <div className="-mr-[3px] -ml-1">
        <TitleBar />
      </div>
      <div className="flex h-[21px] items-center border-b border-[#6b858d] bg-[#9bbac6] pl-[192px]">
        <div className="w-[299px] shrink-0">
          <Counter label="Orders:" />
        </div>
        <div className="w-[302px] shrink-0">
          <Counter label="Position:" />
        </div>
        <p className="w-[258px] shrink-0">Latent gain: &nbsp;-</p>
        <p className="whitespace-nowrap">Gain today: &nbsp;-</p>
      </div>
      <Toolbar />
      <div className="flex flex-col gap-[2px]">
        <EquityPanel />
        <PositionsPanel />
        <PricePanel />
      </div>
    </main>
  );
}
